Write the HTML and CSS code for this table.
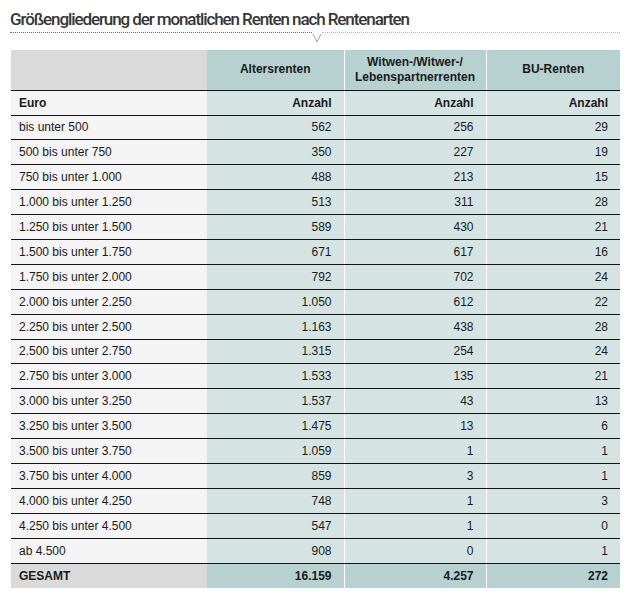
FILE: index.html
```html
<!DOCTYPE html>
<html lang="de">
<head>
<meta charset="utf-8">
<title>Größengliederung der monatlichen Renten nach Rentenarten</title>
<link rel="stylesheet" href="styles.css">
</head>
<body>
<div class="page">
  <h1 class="title">Größengliederung der monatlichen Renten nach Rentenarten</h1>
  <div class="rule">
    <span class="rule-left"></span>
    <svg class="notch" width="10" height="10" viewBox="0 0 10 10"><path d="M1 1 L5 9 L9 1" fill="none" stroke="#9a9a9a" stroke-width="1"/></svg>
    <span class="rule-right"></span>
  </div>
  <table class="tbl">
    <colgroup>
      <col class="c1"><col class="c2"><col class="c3"><col class="c4">
    </colgroup>
    <thead>
      <tr class="head">
        <th class="lab"></th>
        <th class="num-h">Altersrenten</th>
        <th class="num-h sep">Witwen-/Witwer-/<br>Lebenspartnerrenten</th>
        <th class="num-h sep">BU-Renten</th>
      </tr>
      <tr class="unit">
        <th class="lab">Euro</th>
        <th class="num">Anzahl</th>
        <th class="num sep">Anzahl</th>
        <th class="num sep">Anzahl</th>
      </tr>
    </thead>
    <tbody>
      <tr><td class="lab">bis unter 500</td><td class="num">562</td><td class="num sep">256</td><td class="num sep">29</td></tr>
      <tr><td class="lab">500 bis unter 750</td><td class="num">350</td><td class="num sep">227</td><td class="num sep">19</td></tr>
      <tr><td class="lab">750 bis unter 1.000</td><td class="num">488</td><td class="num sep">213</td><td class="num sep">15</td></tr>
      <tr><td class="lab">1.000 bis unter 1.250</td><td class="num">513</td><td class="num sep">311</td><td class="num sep">28</td></tr>
      <tr><td class="lab">1.250 bis unter 1.500</td><td class="num">589</td><td class="num sep">430</td><td class="num sep">21</td></tr>
      <tr><td class="lab">1.500 bis unter 1.750</td><td class="num">671</td><td class="num sep">617</td><td class="num sep">16</td></tr>
      <tr><td class="lab">1.750 bis unter 2.000</td><td class="num">792</td><td class="num sep">702</td><td class="num sep">24</td></tr>
      <tr><td class="lab">2.000 bis unter 2.250</td><td class="num">1.050</td><td class="num sep">612</td><td class="num sep">22</td></tr>
      <tr><td class="lab">2.250 bis unter 2.500</td><td class="num">1.163</td><td class="num sep">438</td><td class="num sep">28</td></tr>
      <tr><td class="lab">2.500 bis unter 2.750</td><td class="num">1.315</td><td class="num sep">254</td><td class="num sep">24</td></tr>
      <tr><td class="lab">2.750 bis unter 3.000</td><td class="num">1.533</td><td class="num sep">135</td><td class="num sep">21</td></tr>
      <tr><td class="lab">3.000 bis unter 3.250</td><td class="num">1.537</td><td class="num sep">43</td><td class="num sep">13</td></tr>
      <tr><td class="lab">3.250 bis unter 3.500</td><td class="num">1.475</td><td class="num sep">13</td><td class="num sep">6</td></tr>
      <tr><td class="lab">3.500 bis unter 3.750</td><td class="num">1.059</td><td class="num sep">1</td><td class="num sep">1</td></tr>
      <tr><td class="lab">3.750 bis unter 4.000</td><td class="num">859</td><td class="num sep">3</td><td class="num sep">1</td></tr>
      <tr><td class="lab">4.000 bis unter 4.250</td><td class="num">748</td><td class="num sep">1</td><td class="num sep">3</td></tr>
      <tr><td class="lab">4.250 bis unter 4.500</td><td class="num">547</td><td class="num sep">1</td><td class="num sep">0</td></tr>
      <tr><td class="lab">ab 4.500</td><td class="num">908</td><td class="num sep">0</td><td class="num sep">1</td></tr>
    </tbody>
    <tfoot>
      <tr class="total">
        <td class="lab">GESAMT</td>
        <td class="num">16.159</td>
        <td class="num sep">4.257</td>
        <td class="num sep">272</td>
      </tr>
    </tfoot>
  </table>
</div>
</body>
</html>
```

FILE: styles.css
```css
* { box-sizing: border-box; }
html, body { margin: 0; padding: 0; background: #ffffff; }
body {
  font-family: "Liberation Sans", Arial, sans-serif;
  color: #1a1a1a;
}
.page {
  width: 631px;
  padding: 8px 11px 0 11px;
}
.title {
  margin: 0 0 0 -1px;
  font-family: Roboto, "Liberation Sans", sans-serif;
  font-weight: 500;
  font-size: 17px;
  letter-spacing: -1.1px;
  line-height: 22px;
  color: #363636;
}
.rule {
  display: flex;
  align-items: flex-start;
  height: 18px;
  margin-top: 2px;
  margin-left: -1px;
}
.rule-left {
  width: 302px;
  border-top: 1px dotted #6a6a6a;
}
.notch {
  margin-top: 1px;
  flex: none;
}
.rule-right {
  flex: 1;
  border-top: 1px dotted #b8b8b8;
}
.tbl {
  width: 609px;
  border-collapse: collapse;
  table-layout: fixed;
  font-size: 12px;
}
.c1 { width: 196px; }
.c2 { width: 137px; }
.c3 { width: 142px; }
.c4 { width: 134px; }
.tbl th, .tbl td {
  padding: 0 12px 0 8px;
  border-bottom: 1px solid #141414;
  height: 24.9px;
  white-space: nowrap;
  vertical-align: middle;
}
.tbl th { font-weight: bold; }
.lab { text-align: left; background: #f4f4f4; }
.num { text-align: right; background: #d5e4e3; }
.sep { border-left: 1px solid #ffffff; }
.head th { height: 40px; line-height: 15px; }
.head .lab { background: #dadada; }
.head .num-h { background: #b6d1d0; text-align: center; padding: 0 4px; }
.unit th { height: 25px; }
.total td { font-weight: bold; border-bottom: none; height: 25px; }
.total .lab { background: #dadada; }
.total .num { background: #b6d1d0; }
```
